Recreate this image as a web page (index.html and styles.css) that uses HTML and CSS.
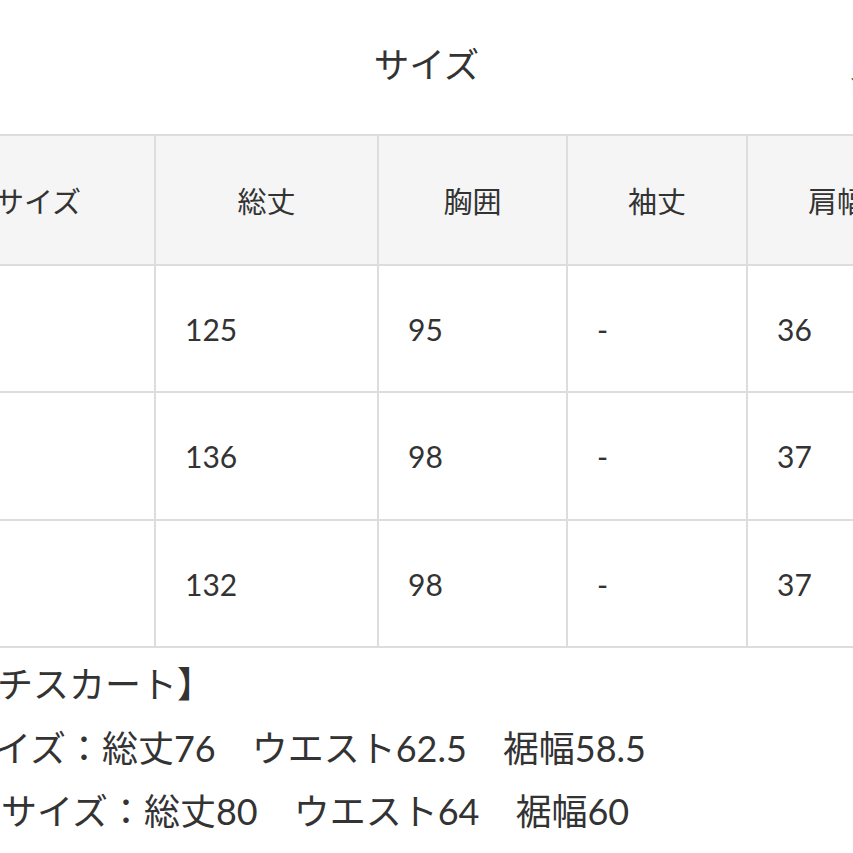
FILE: index.html
```html
<!DOCTYPE html>
<html lang="ja">
<head>
<meta charset="utf-8">
<title>サイズ</title>
<link rel="stylesheet" href="styles.css">
</head>
<body>
<div class="page">
  <div class="title-row">
    <span class="spacer"></span>
    <h1 class="title">サイズ</h1>
    <span class="edge">ノ</span>
  </div>
  <table class="size-table">
    <colgroup>
      <col class="c1"><col class="c2"><col class="c3"><col class="c4"><col class="c5">
    </colgroup>
    <thead>
      <tr class="head">
        <th>サイズ</th><th>総丈</th><th>胸囲</th><th>袖丈</th><th>肩幅</th>
      </tr>
    </thead>
    <tbody>
      <tr class="row r1"><td></td><td>125</td><td>95</td><td>-</td><td>36</td></tr>
      <tr class="row r2"><td></td><td>136</td><td>98</td><td>-</td><td>37</td></tr>
      <tr class="row r3"><td></td><td>132</td><td>98</td><td>-</td><td>37</td></tr>
    </tbody>
  </table>
  <div class="notes">
    <p class="note n1">チスカート】</p>
    <p class="note n2">イズ：総丈76　ウエスト62.5　裾幅58.5</p>
    <p class="note n3">サイズ：総丈80　ウエスト64　裾幅60</p>
  </div>
</div>
</body>
</html>
```
FILE: styles.css
```css
html, body {
  margin: 0;
  padding: 0;
  overflow: hidden;
  background: #ffffff;
}
body {
  width: 853px;
  height: 853px;
  font-family: Lato, "Noto Sans CJK JP", sans-serif;
  color: #333333;
}
.page {
  width: 853px;
  overflow: hidden;
  height: 853px;
}
.title-row {
  box-sizing: border-box;
  height: 134px;
  padding-top: 41px;
  display: grid;
  grid-template-columns: 1fr auto 1fr;
  align-items: start;
}
.title {
  margin: 0;
  font-size: 35.5px;
  line-height: 44px;
  font-weight: 400;
  font-family: "Noto Sans CJK JP", sans-serif;
  color: #333333;
}
.edge {
  justify-self: end;
  margin-right: -24px;
  font-size: 30px;
  line-height: 44px;
  padding-top: 4px;
  font-family: "Noto Sans CJK JP", sans-serif;
  color: #555555;
}
.size-table {
  margin-left: -80px;
  width: 1006px;
  table-layout: fixed;
  border-collapse: collapse;
}
.c1 { width: 234px; }
.c2 { width: 223px; }
.c3 { width: 189px; }
.c4 { width: 180px; }
.c5 { width: 180px; }
.size-table th,
.size-table td {
  border: 2px solid #dddddd;
  padding: 0;
  vertical-align: middle;
}
.size-table th {
  background: #f5f5f5;
  font-family: "Noto Sans CJK JP", sans-serif;
  font-weight: 400;
  font-size: 29px;
  text-align: center;
  color: #333333;
}
.size-table td {
  font-size: 30px;
  text-align: left;
  padding-left: 29px;
  color: #333333;
}
.head { height: 130px; }
.r1 { height: 127px; }
.r2 { height: 128px; }
.r3 { height: 127px; }
.notes {
  margin-top: 5px;
}
.note {
  margin: 0;
  font-size: 36px;
  line-height: 63.5px;
  white-space: nowrap;
  color: #333333;
}
.n1 { margin-left: -3px; }
.n2 { margin-left: -5px; }
.n3 { margin-left: 1px; }
```
